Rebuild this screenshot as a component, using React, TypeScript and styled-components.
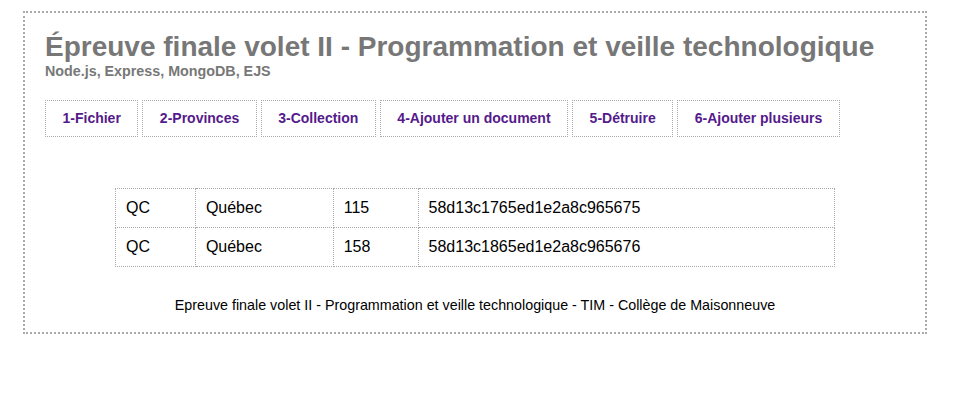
import React from "react";
import styled, { createGlobalStyle } from "styled-components";

const Global = createGlobalStyle`
  body {
    margin: 8px;
    background: #fff;
    font-family: "Liberation Sans", Arial, sans-serif;
  }
`;

const Frame = styled.div`
  width: 900px;
  margin: 3px 15px;
  border: 2px dotted #aaa;
  padding: 19px 0 19px 0;
`;

const Header = styled.header`
  padding: 0 20px;
`;

const Title = styled.h1`
  margin: 0;
  font-size: 28px;
  line-height: 30px;
  font-weight: bold;
  color: #777;
`;

const Subtitle = styled.h2`
  margin: 2px 0 0;
  font-size: 14.3px;
  line-height: 15px;
  font-weight: bold;
  color: #777;
`;

const Nav = styled.nav`
  display: flex;
  gap: 4px;
  margin-top: 21px;
`;

const NavLink = styled.a`
  display: block;
  border: 1px dotted #aaa;
  padding: 10px 16.5px;
  font-size: 14px;
  line-height: 15px;
  font-weight: bold;
  color: #551a8b;
  text-decoration: none;
`;

const Table = styled.table`
  width: 720px;
  margin: 51px auto 0;
  border-collapse: collapse;
  font-size: 16px;
  color: #000;
`;

const Cell = styled.td<{ $w: number }>`
  width: ${(p) => p.$w}px;
  border: 1px dotted #aaa;
  padding: 10px 10px;
  line-height: 18px;
  box-sizing: border-box;
`;

const Footer = styled.footer`
  margin-top: 30px;
  text-align: center;
  font-size: 14.3px;
  line-height: 16px;
  color: #000;
`;

const links = [
  "1-Fichier",
  "2-Provinces",
  "3-Collection",
  "4-Ajouter un document",
  "5-Détruire",
  "6-Ajouter plusieurs",
];

const rows = [
  ["QC", "Québec", "115", "58d13c1765ed1e2a8c965675"],
  ["QC", "Québec", "158", "58d13c1865ed1e2a8c965676"],
];

const widths = [80, 138, 85, 417];

export default function App() {
  return (
    <>
      <Global />
      <Frame>
        <Header>
          <Title>Épreuve finale volet II - Programmation et veille technologique</Title>
          <Subtitle>Node.js, Express, MongoDB, EJS</Subtitle>
          <Nav>
            {links.map((l) => (
              <NavLink key={l} href="#">
                {l}
              </NavLink>
            ))}
          </Nav>
        </Header>
        <Table>
          <tbody>
            {rows.map((r, i) => (
              <tr key={i}>
                {r.map((c, j) => (
                  <Cell key={j} $w={widths[j]}>
                    {c}
                  </Cell>
                ))}
              </tr>
            ))}
          </tbody>
        </Table>
        <Footer>
          Epreuve finale volet II - Programmation et veille technologique - TIM - Collège de Maisonneuve
        </Footer>
      </Frame>
    </>
  );
}
